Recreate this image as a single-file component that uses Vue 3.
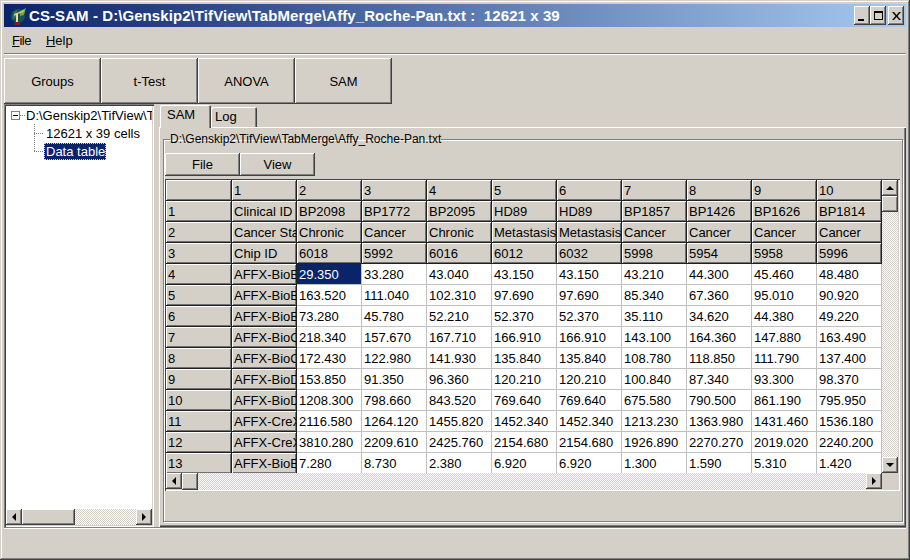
<template>
  <div class="window">
    <div class="titlebar">
      <svg class="appIcon" width="18" height="18" viewBox="0 0 18 18">
        <circle cx="8" cy="9" r="7" fill="#1b4f5a" />
        <path d="M2 13 L4 5 L7 3 L6 10 Z" fill="#2f7f58" />
        <path d="M10 4 L16 1 L14 8 L10 9 Z" fill="#6aa83a" />
        <path d="M4 7 L14 3 L13.500 5 L8 7 V16 H6 V8 L4 9 Z" fill="#d8c06a" />
        <path d="M6 6.500 H8 V16 H6 Z" fill="#e8d8a0" />
        <path d="M4.500 15 H10 V18 H4.500 Z" fill="#8a1c14" />
      </svg>
      <span class="titleText">CS-SAM - D:\Genskip2\TifView\TabMerge\Affy_Roche-Pan.txt :&nbsp; 12621 x 39</span>
      <div class="capButtons">
        <button class="capBtn"><span class="minGlyph"></span></button>
        <button class="capBtn"><span class="maxGlyph"></span></button>
        <button class="capBtn closeBtn">
          <svg width="9" height="8" viewBox="0 0 9 8"><path d="M0 0h2l2.500 3 2.500-3h2L5.500 4 9 8H7L4.500 5 2 8H0l3.500-4z" fill="#000" /></svg>
        </button>
      </div>
    </div>

    <div class="menubar">
      <span class="menuItem fileItem"><u>F</u>ile</span>
      <span class="menuItem"><u>H</u>elp</span>
    </div>

    <div class="toolbar">
      <button v-for="b in toolButtons" :key="b" class="toolBtn">{{ b }}</button>
    </div>

    <div class="main">
      <div class="treePanel">
        <div class="tree">
          <div class="treeRoot">
            <span class="expander"><span class="minus"></span></span>
            <span class="dotH"></span>
            <span class="rootLabel">D:\Genskip2\TifView\TabMerge</span>
          </div>
          <div class="treeChild">
            <span class="elbow"></span>
            <span class="treeLabel">12621 x 39 cells</span>
          </div>
          <div class="treeChild">
            <span class="elbow last"></span>
            <span class="treeLabel selected">Data table</span>
          </div>
        </div>
        <div class="hscroll">
          <button class="arrowBtn"><span class="triLeft"></span></button>
          <button class="thumb treeThumb"></button>
          <div class="track"></div>
          <button class="arrowBtn"><span class="triRight"></span></button>
        </div>
      </div>

      <div class="rightSide">
        <div class="tabs">
          <div class="tab active">SAM</div>
          <div class="tab">Log</div>
        </div>
        <div class="tabPane">
          <fieldset class="group">
            <legend>D:\Genskip2\TifView\TabMerge\Affy_Roche-Pan.txt</legend>
            <div class="groupButtons">
              <button class="smallBtn">File</button>
              <button class="smallBtn">View</button>
            </div>
            <div class="gridWrap">
              <div class="gridRow">
                <div class="grid">
                  <template v-for="(row, r) in rows" :key="r">
                    <div
                      v-for="(cell, c) in row"
                      :key="c"
                      class="cell"
                      :class="{ fixed: r < 4 || c < 2, current: r === 4 && c === 2 }"
                    >{{ cell }}</div>
                  </template>
                </div>
                <div class="vscroll">
                  <button class="arrowBtn"><span class="triUp"></span></button>
                  <button class="thumb vThumb"></button>
                  <div class="track"></div>
                  <button class="arrowBtn"><span class="triDown"></span></button>
                </div>
              </div>
              <div class="hscroll gridH">
                <button class="arrowBtn"><span class="triLeft"></span></button>
                <button class="thumb gridThumb"></button>
                <div class="track"></div>
                <button class="arrowBtn"><span class="triRight"></span></button>
              </div>
            </div>
          </fieldset>
        </div>
      </div>
    </div>

    <div class="statusbar"></div>
  </div>
</template>

<script setup>
const toolButtons = ['Groups', 't-Test', 'ANOVA', 'SAM']

const rows = [
  ['', '1', '2', '3', '4', '5', '6', '7', '8', '9', '10'],
  ['1', 'Clinical ID', 'BP2098', 'BP1772', 'BP2095', 'HD89', 'HD89', 'BP1857', 'BP1426', 'BP1626', 'BP1814'],
  ['2', 'Cancer Stage', 'Chronic', 'Cancer', 'Chronic', 'Metastasis', 'Metastasis', 'Cancer', 'Cancer', 'Cancer', 'Cancer'],
  ['3', 'Chip ID', '6018', '5992', '6016', '6012', '6032', '5998', '5954', '5958', '5996'],
  ['4', 'AFFX-BioB-5', '29.350', '33.280', '43.040', '43.150', '43.150', '43.210', '44.300', '45.460', '48.480'],
  ['5', 'AFFX-BioB-M', '163.520', '111.040', '102.310', '97.690', '97.690', '85.340', '67.360', '95.010', '90.920'],
  ['6', 'AFFX-BioB-3', '73.280', '45.780', '52.210', '52.370', '52.370', '35.110', '34.620', '44.380', '49.220'],
  ['7', 'AFFX-BioC-5', '218.340', '157.670', '167.710', '166.910', '166.910', '143.100', '164.360', '147.880', '163.490'],
  ['8', 'AFFX-BioC-3', '172.430', '122.980', '141.930', '135.840', '135.840', '108.780', '118.850', '111.790', '137.400'],
  ['9', 'AFFX-BioDn-5', '153.850', '91.350', '96.360', '120.210', '120.210', '100.840', '87.340', '93.300', '98.370'],
  ['10', 'AFFX-BioDn-3', '1208.300', '798.660', '843.520', '769.640', '769.640', '675.580', '790.500', '861.190', '795.950'],
  ['11', 'AFFX-CreX-5', '2116.580', '1264.120', '1455.820', '1452.340', '1452.340', '1213.230', '1363.980', '1431.460', '1536.180'],
  ['12', 'AFFX-CreX-3', '3810.280', '2209.610', '2425.760', '2154.680', '2154.680', '1926.890', '2270.270', '2019.020', '2240.200'],
  ['13', 'AFFX-BioB-5', '7.280', '8.730', '2.380', '6.920', '6.920', '1.300', '1.590', '5.310', '1.420'],
]
</script>

<style>
html, body {
  margin: 0;
  background: #d4d0c8;
}
</style>

<style scoped>
.window {
  width: 910px;
  height: 560px;
  box-sizing: border-box;
  padding: 4px;
  display: flex;
  flex-direction: column;
  background: #d4d0c8;
  font-family: "Liberation Sans", Arial, sans-serif;
  font-size: 13px;
  color: #000;
  box-shadow: inset -1px -1px #404040, inset 1px 1px #d4d0c8, inset -2px -2px #808080, inset 2px 2px #fff;
}
button {
  font: inherit;
  color: inherit;
  padding: 0;
  border: 0;
  background: #d4d0c8;
}

.titlebar {
  height: 23px;
  flex: none;
  display: flex;
  align-items: center;
  padding: 0 2px 0 6px;
  background: linear-gradient(to right, #0a246a, #a6caf0);
}
.appIcon {
  flex: none;
  margin-right: 1px;
}
.titleText {
  flex: 1;
  color: #fff;
  font-size: 15px;
  font-weight: 700;
  letter-spacing: 0.08px;
  white-space: nowrap;
}
.capButtons {
  display: flex;
}
.capBtn {
  width: 16px;
  height: 19px;
  display: flex;
  align-items: center;
  justify-content: center;
  box-shadow: inset -1px -1px #404040, inset 1px 1px #fff, inset -2px -2px #808080;
}
.closeBtn {
  margin-left: 2px;
}
.minGlyph {
  width: 6px;
  height: 2px;
  background: #000;
  margin-top: 8px;
  margin-right: 2px;
}
.maxGlyph {
  width: 7px;
  height: 6px;
  border: 1px solid #000;
  border-top-width: 2px;
}

.menubar {
  height: 26px;
  flex: none;
  display: flex;
  align-items: center;
  gap: 15px;
  padding-left: 8px;
  border-bottom: 1px solid #808080;
  box-shadow: 0 1px #fff;
}
.fileItem {
  letter-spacing: -0.5px;
}

.toolbar {
  height: 46px;
  flex: none;
  display: flex;
  margin-top: 4px;
}
.toolBtn {
  width: 97px;
  height: 46px;
  box-shadow: inset -1px -1px #404040, inset 1px 1px #fff, inset -2px -2px #808080;
}

.main {
  height: 423px;
  flex: none;
  display: flex;
}
.treePanel {
  width: 150px;
  box-sizing: border-box;
  background: #fff;
  display: flex;
  flex-direction: column;
  padding: 2px;
  box-shadow: inset 1px 1px #808080, inset 2px 2px #404040, inset -1px -1px #fff, inset -2px -2px #d4d0c8;
}
.tree {
  flex: 1;
  overflow: hidden;
  padding: 1px 0 0 5px;
  white-space: nowrap;
}
.treeRoot {
  height: 17px;
  display: flex;
  align-items: center;
}
.expander {
  width: 9px;
  height: 9px;
  box-sizing: border-box;
  border: 1px solid #808080;
  display: flex;
  align-items: center;
  justify-content: center;
  flex: none;
}
.minus {
  width: 5px;
  height: 1px;
  background: #000;
}
.dotH {
  width: 5px;
  border-top: 1px dotted #808080;
  flex: none;
}
.rootLabel {
  padding-left: 1px;
  line-height: 17px;
}
.treeChild {
  height: 18px;
  display: flex;
  align-items: center;
  padding-left: 23px;
}
.elbow {
  width: 10px;
  height: 100%;
  flex: none;
  background:
    repeating-linear-gradient(to bottom, #808080 0 1px, transparent 1px 2px) left top / 1px 100% no-repeat,
    repeating-linear-gradient(to right, #808080 0 1px, transparent 1px 2px) left center / 100% 1px no-repeat;
}
.elbow.last {
  background-size: 1px 50%, 100% 1px;
}
.treeLabel {
  padding: 0 1px 0 2px;
  line-height: 17px;
}
.selected {
  background: #0a246a;
  color: #fff;
  outline: 1px dotted #d4d0c8;
  outline-offset: -1px;
}

.hscroll {
  height: 16px;
  flex: none;
  display: flex;
}
.vscroll {
  width: 16px;
  flex: none;
  display: flex;
  flex-direction: column;
}
.track {
  flex: 1;
  background: repeating-conic-gradient(#fff 0 25%, #d4d0c8 0 50%) 0 0 / 2px 2px;
}
.arrowBtn {
  width: 16px;
  height: 16px;
  flex: none;
  display: flex;
  align-items: center;
  justify-content: center;
  box-shadow: inset -1px -1px #404040, inset 1px 1px #fff, inset -2px -2px #808080;
}
.thumb {
  flex: none;
  box-shadow: inset -1px -1px #404040, inset 1px 1px #fff, inset -2px -2px #808080;
}
.treeThumb {
  width: 53px;
}
.gridThumb {
  width: 16px;
}
.vThumb {
  height: 16px;
}
.triLeft, .triRight, .triUp, .triDown {
  width: 0;
  height: 0;
  border: 4px solid transparent;
}
.triLeft {
  border-left: 0;
  border-right-color: #000;
}
.triRight {
  border-right: 0;
  border-left-color: #000;
}
.triUp {
  border-top: 0;
  border-bottom-color: #000;
}
.triDown {
  border-bottom: 0;
  border-top-color: #000;
}

.rightSide {
  flex: 1;
  display: flex;
  flex-direction: column;
  margin-left: 5px;
  min-width: 0;
}
.tabs {
  height: 23px;
  flex: none;
  display: flex;
  align-items: flex-end;
  padding-left: 1px;
}
.tab {
  width: 46px;
  height: 20px;
  box-sizing: border-box;
  padding: 2px 0 0 4px;
  border-radius: 2px 2px 0 0;
  box-shadow: inset 1px 1px #fff, inset -1px 0 #404040, inset -2px 0 #808080;
}
.tab.active {
  width: 51px;
  height: 23px;
  padding: 2px 0 0 7px;
  position: relative;
  top: 1px;
  z-index: 1;
  background: #d4d0c8;
}
.tabPane {
  flex: 1;
  box-sizing: border-box;
  padding: 6px 3px 5px 4px;
  min-height: 0;
  box-shadow: inset 1px 1px #fff, inset -1px -1px #404040, inset -2px -2px #808080;
}
.group {
  box-sizing: border-box;
  height: 100%;
  margin: 0;
  padding: 7px 1px 0 1px;
  border: 1px solid #808080;
  box-shadow: 1px 1px #fff, inset 1px 1px #fff;
  min-width: 0;
}
.group legend {
  padding: 0;
  margin-left: 5px;
  line-height: 13px;
  font-size: 12px;
}
.groupButtons {
  display: flex;
}
.smallBtn {
  width: 75px;
  height: 23px;
  box-shadow: inset -1px -1px #404040, inset 1px 1px #fff, inset -2px -2px #808080;
}
.gridWrap {
  margin-top: 3px;
  width: 735px;
  box-sizing: border-box;
  padding: 1px 0 1px 1px;
  box-shadow: inset 1px 1px #404040, inset -1px -1px #fff;
}
.gridRow {
  display: flex;
  height: 293px;
}
.grid {
  width: 716px;
  flex: none;
  overflow: hidden;
  display: grid;
  grid-template-columns: 66px repeat(10, 65px);
  grid-auto-rows: 21px;
  background: #fff;
}
.cell {
  box-sizing: border-box;
  padding: 3px 0 0 2px;
  line-height: 15px;
  white-space: nowrap;
  overflow: hidden;
  border-right: 1px solid #c0c0c0;
  border-bottom: 1px solid #c0c0c0;
}
.cell.fixed {
  background: #d4d0c8;
  border-right: 1px solid #202020;
  border-bottom: 1px solid #202020;
  box-shadow: inset 1px 1px #fff, inset -1px -1px #707070;
}
.cell.current {
  background: #0a246a;
  color: #fff;
}
.gridH {
  width: 716px;
  height: 17px;
}

.statusbar {
  flex: 1;
  border-top: 1px solid #808080;
  box-shadow: inset 0 1px #fff;
}
</style>
